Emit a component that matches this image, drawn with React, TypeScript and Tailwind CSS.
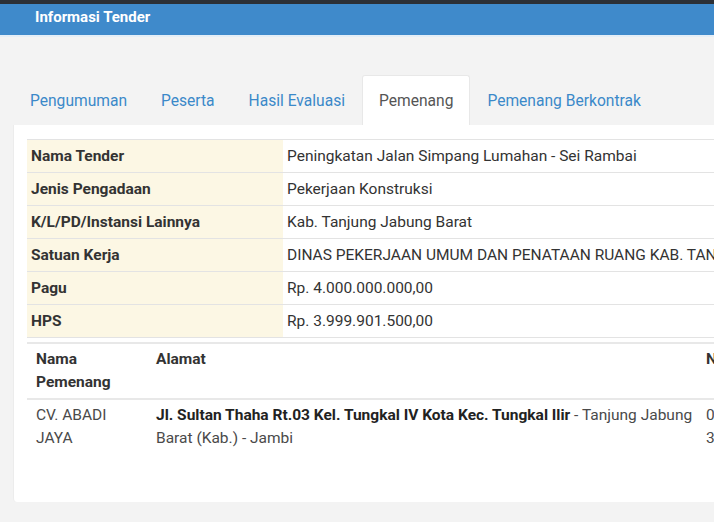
import React from 'react';

const tabs = ['Pengumuman', 'Peserta', 'Hasil Evaluasi', 'Pemenang', 'Pemenang Berkontrak'];

const info: [string, string][] = [
  ['Nama Tender', 'Peningkatan Jalan Simpang Lumahan - Sei Rambai'],
  ['Jenis Pengadaan', 'Pekerjaan Konstruksi'],
  ['K/L/PD/Instansi Lainnya', 'Kab. Tanjung Jabung Barat'],
  ['Satuan Kerja', 'DINAS PEKERJAAN UMUM DAN PENATAAN RUANG KAB. TANJUNG JABUNG BARAT'],
  ['Pagu', 'Rp. 4.000.000.000,00'],
  ['HPS', 'Rp. 3.999.901.500,00'],
];

export default function App() {
  return (
    <div className="w-[714px] h-[522px] overflow-hidden bg-[#f3f3f3] font-['Roboto',sans-serif] text-[#333]">
      <div className="h-[4px] bg-[#2c3036]" />
      <div className="h-[33px] bg-[#3f8acb] border-b-[2px] border-[#e4eef7] pl-[35px] pt-[3px]">
        <h1 className="text-[15px] leading-[20px] font-bold text-white">Informasi Tender</h1>
      </div>

      <div className="pl-[13px] pt-[38px]">
        <ul className="flex">
          {tabs.map((t) => (
            <li
              key={t}
              className={
                t === 'Pemenang'
                  ? 'px-[16px] pt-[15px] pb-[13px] text-[15.6px] leading-[20px] bg-white text-[#555] rounded-t-[3px] border border-b-0 border-[#e8e8e8]'
                  : 'px-[16px] pt-[15px] pb-[13px] text-[15.6px] leading-[20px] text-[#3b89c9] border border-transparent'
              }
            >
              {t}
            </li>
          ))}
        </ul>

        <div className="bg-white w-[760px] h-[377px] rounded-bl-[4px] border-l border-[#ececec] px-[13px] pt-[14px]">
          <table className="w-[900px] border-collapse text-[15.5px]">
            <tbody>
              {info.map(([k, v]) => (
                <tr key={k} className="border-t border-b border-[#e3e3e3] h-[33px]">
                  <th className="w-[256px] bg-[#fcf7e4] text-left font-bold pl-[4px] pt-[1px]">{k}</th>
                  <td className="pl-[4px] pt-[1px] whitespace-nowrap">{v}</td>
                </tr>
              ))}
            </tbody>
          </table>

          <table className="mt-[4px] w-[900px] border-collapse text-[15.5px] leading-[23px]">
            <thead>
              <tr className="border-t-[2px] border-b-[2px] border-[#e8e8e8] align-top">
                <th className="w-[124px] text-left font-bold pl-[9px] pr-[5px] py-[4px]">
                  Nama
                  <br />
                  Pemenang
                </th>
                <th className="w-[550px] text-left font-bold px-[5px] py-[4px]">Alamat</th>
                <th className="text-left font-bold px-[5px] py-[4px]">NPWP</th>
              </tr>
            </thead>
            <tbody>
              <tr className="align-top text-[#4a4a4a]">
                <td className="pl-[9px] pr-[5px] py-[4px]">
                  CV. ABADI
                  <br />
                  JAYA
                </td>
                <td className="pl-[5px] pr-[4px] py-[4px]">
                  <b className="text-[#222]">Jl. Sultan Thaha Rt.03 Kel. Tungkal IV Kota Kec. Tungkal Ilir</b> - Tanjung
                  Jabung Barat (Kab.) - Jambi
                </td>
                <td className="px-[5px] py-[4px]">
                  01.234.567.8-
                  <br />
                  331.000
                </td>
              </tr>
            </tbody>
          </table>
        </div>
      </div>
    </div>
  );
}
